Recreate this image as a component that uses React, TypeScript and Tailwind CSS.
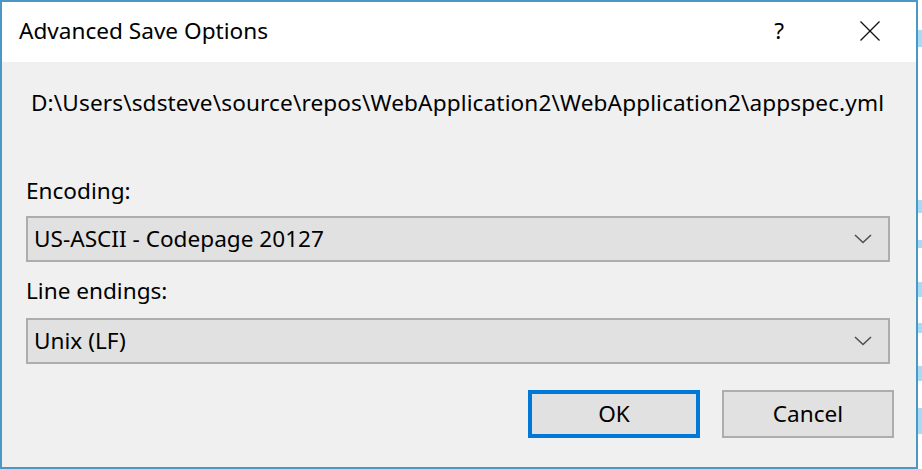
import React from "react";

const stripBlocks = [
  { top: 30, h: 17 },
  { top: 200, h: 13 },
  { top: 240, h: 8 },
  { top: 282, h: 15 },
  { top: 323, h: 10 },
  { top: 366, h: 15 },
  { top: 408, h: 26 },
];

function Chevron() {
  return (
    <svg width="18" height="10" viewBox="0 0 18 10" className="shrink-0">
      <polyline points="1,1 9,8.5 17,1" fill="none" stroke="#505050" strokeWidth="1.6" />
    </svg>
  );
}

function Combo({ value }: { value: string }) {
  return (
    <div className="ml-[24px] w-[864px] h-[46px] border-2 border-[#adadad] bg-[#e1e1e1] flex items-center pl-[6px] pr-[16px]">
      <span className="flex-1 leading-[32px]">{value}</span>
      <Chevron />
    </div>
  );
}

export default function App() {
  return (
    <div className="w-[922px] h-[469px] bg-white flex text-black text-[22.6px] font-['Noto_Sans',sans-serif] overflow-hidden">
      {/* dialog window */}
      <div className="w-[918px] h-[469px] border-2 border-[#4b97c5] bg-[#f0f0f0] flex flex-col shrink-0">
        {/* title bar */}
        <div className="h-[60px] bg-white flex items-center pl-[17px]">
          <span className="leading-[32px] -mt-[3px]">Advanced Save Options</span>
          <span className="ml-auto leading-[32px] -mt-[3px] mr-[76px]">?</span>
          <svg width="20" height="20" viewBox="0 0 20 20" className="mr-[36px] -mt-[3px]">
            <line x1="0.5" y1="0.5" x2="19.5" y2="19.5" stroke="#111" strokeWidth="1.3" />
            <line x1="19.5" y1="0.5" x2="0.5" y2="19.5" stroke="#111" strokeWidth="1.3" />
          </svg>
        </div>

        {/* body */}
        <div className="flex flex-col">
          <div className="mt-[25px] ml-[29px] leading-[32px] whitespace-nowrap tracking-[0.12px]">
            D:\Users\sdsteve\source\repos\WebApplication2\WebApplication2\appspec.yml
          </div>

          <div className="mt-[56px] ml-[24px] leading-[32px]">Encoding:</div>
          <div className="mt-[9px]">
            <Combo value="US-ASCII - Codepage 20127" />
          </div>

          <div className="mt-[13px] ml-[24px] leading-[32px]">Line endings:</div>
          <div className="mt-[11px]">
            <Combo value="Unix (LF)" />
          </div>

          <div className="mt-[26px] flex justify-end gap-[22px] pr-[22px]">
            <button className="w-[172px] h-[48px] border-4 border-[#0078d7] bg-[#e1e1e1] leading-[32px]">OK</button>
            <button className="w-[172px] h-[48px] border-2 border-[#adadad] bg-[#e1e1e1] leading-[32px]">Cancel</button>
          </div>
        </div>
      </div>

      {/* sliver of the window behind */}
      <div className="flex-1 flex flex-col bg-white">
        {stripBlocks.map((b, i) => (
          <div
            key={i}
            className="bg-[#a6dcf5]"
            style={{ marginTop: i === 0 ? b.top : b.top - (stripBlocks[i - 1].top + stripBlocks[i - 1].h), height: b.h }}
          />
        ))}
      </div>
    </div>
  );
}
